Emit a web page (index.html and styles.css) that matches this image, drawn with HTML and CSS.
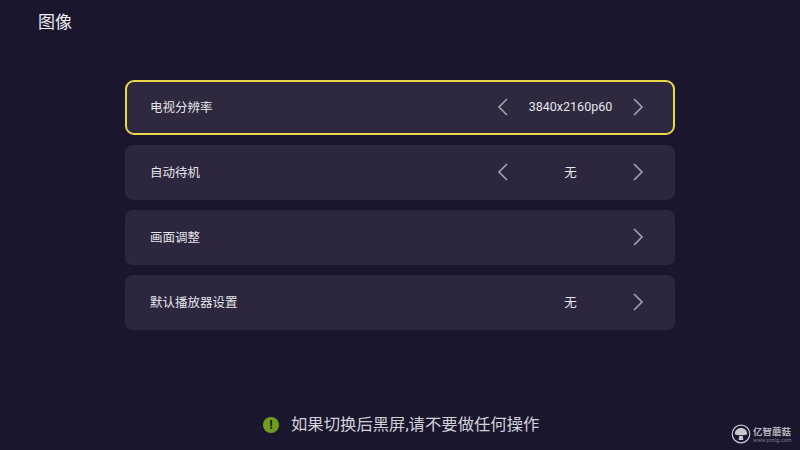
FILE: index.html
```html
<!DOCTYPE html>
<html lang="zh-CN">
  <head>
    <meta charset="UTF-8" />
    <title>图像</title>
    <link rel="stylesheet" href="styles.css">
  </head>
  <body>
    <div class="screen">
      <h1 class="title">图像</h1>

      <div class="menu">
        <div class="row row-active">
          <span class="row-label">电视分辨率</span>
          <div class="row-control">
            <svg class="arrow" viewBox="0 0 12 18"><path d="M10 1 2 9l8 8" /></svg>
            <span class="row-value">3840x2160p60</span>
            <svg class="arrow" viewBox="0 0 12 18"><path d="M2 1l8 8-8 8" /></svg>
          </div>
        </div>

        <div class="row">
          <span class="row-label">自动待机</span>
          <div class="row-control">
            <svg class="arrow" viewBox="0 0 12 18"><path d="M10 1 2 9l8 8" /></svg>
            <span class="row-value">无</span>
            <svg class="arrow" viewBox="0 0 12 18"><path d="M2 1l8 8-8 8" /></svg>
          </div>
        </div>

        <div class="row">
          <span class="row-label">画面调整</span>
          <div class="row-control">
            <span class="arrow"></span>
            <span class="row-value"></span>
            <svg class="arrow" viewBox="0 0 12 18"><path d="M2 1l8 8-8 8" /></svg>
          </div>
        </div>

        <div class="row">
          <span class="row-label">默认播放器设置</span>
          <div class="row-control">
            <span class="arrow"></span>
            <span class="row-value">无</span>
            <svg class="arrow" viewBox="0 0 12 18"><path d="M2 1l8 8-8 8" /></svg>
          </div>
        </div>
      </div>

      <div class="notice">
        <span class="notice-icon">!</span>
        <span class="notice-text">如果切换后黑屏,请不要做任何操作</span>
      </div>

      <div class="watermark">
        <svg class="watermark-logo" viewBox="0 0 20 20">
          <circle class="logo-ring" cx="10" cy="10" r="8.8" />
          <path class="logo-cap" d="M3.8 10.2C3.8 6.4 6.600 4 10 4s6.200 2.400 6.200 6.200c-1.600.8-3.600 1-6.200 1s-4.600-.2-6.200-1z" />
          <path class="logo-cap" d="M8.200 12h3.600l.5 4H7.700z" />
        </svg>
        <div class="watermark-text">
          <span class="watermark-name">亿智蘑菇</span>
          <span class="watermark-url">www.yznlg.com</span>
        </div>
      </div>
    </div>
  </body>
</html>
```

FILE: styles.css
```css
* {
  margin: 0;
  padding: 0;
  box-sizing: border-box;
}

body {
  width: 800px;
  height: 450px;
  overflow: hidden;
  background-color: #1a162e;
  font-family: "Roboto", "Noto Sans CJK SC", sans-serif;
}

.screen {
  position: relative;
  height: 450px;
  padding: 0 125px;
}

.title {
  position: absolute;
  left: 38px;
  top: 10px;
  font-size: 17px;
  line-height: 24px;
  font-weight: 400;
  color: #eeedf2;
}

.menu {
  display: flex;
  flex-direction: column;
  gap: 10px;
  padding-top: 80px;
}

.row {
  display: flex;
  align-items: center;
  justify-content: space-between;
  height: 55px;
  padding: 0 31px 2px 25px;
  border-radius: 8px;
  background-color: #2c273e;
}

.row-active {
  border: 2px solid #e8d94a;
  border-radius: 9px;
  padding: 0 29px 2px 23px;
  background-color: #2e293f;
}

.row-label {
  font-size: 12.5px;
  color: #e6e5ea;
}

.row-control {
  display: flex;
  align-items: center;
}

.arrow {
  display: block;
  width: 12px;
  height: 18px;
}

.arrow path {
  fill: none;
  stroke: #a5a2b2;
  stroke-width: 1.6;
}

.row-value {
  width: 123px;
  font-size: 12.5px;
  text-align: center;
  color: #e6e5ea;
}

.notice {
  position: absolute;
  left: 263px;
  top: 413px;
  display: flex;
  align-items: center;
  gap: 12px;
}

.notice-icon {
  width: 16px;
  height: 16px;
  margin-top: -1px;
  border-radius: 50%;
  background-color: #6f9e1e;
  color: #1a162e;
  font-size: 13px;
  font-weight: 700;
  line-height: 16px;
  text-align: center;
}

.notice-text {
  font-size: 16.35px;
  line-height: 24px;
  color: #d2d1d8;
}

.watermark {
  position: absolute;
  left: 731px;
  top: 424px;
  display: flex;
  align-items: center;
  gap: 2px;
}

.watermark-logo {
  display: block;
  width: 20px;
  height: 20px;
}

.logo-ring {
  fill: none;
  stroke: #c9c8ce;
  stroke-width: 1.2;
}

.logo-cap {
  fill: #c9c8ce;
}

.watermark-text {
  display: flex;
  flex-direction: column;
  color: #b5b4bc;
}

.watermark-name {
  font-size: 9.5px;
  line-height: 11px;
  font-weight: 700;
  white-space: nowrap;
}

.watermark-url {
  font-size: 5.5px;
  line-height: 6px;
  white-space: nowrap;
  color: #7f7d8a;
}
```
